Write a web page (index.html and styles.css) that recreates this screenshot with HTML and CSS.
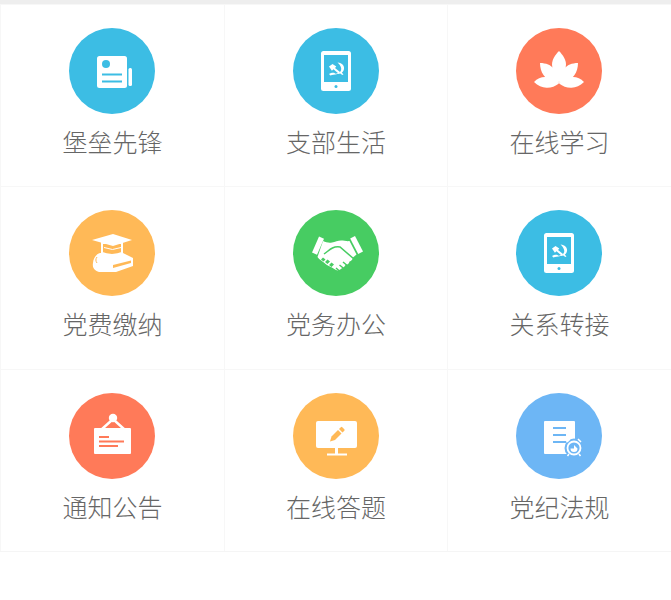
FILE: index.html
```html
<!DOCTYPE html>
<html lang="zh-CN">
<head>
	<meta charset="UTF-8">
	<meta name="viewport" content="width=device-width, initial-scale=1.0">
	<title>党建</title>
	<link rel="stylesheet" href="styles.css">
</head>
<body>

<div class="topBar"></div>

<svg class="defs" width="0" height="0">
	<symbol id="tablet" viewBox="0 0 86 86">
		<rect x="28" y="23" width="30" height="40" rx="2.500" fill="#fff"/>
		<rect x="31" y="27" width="24" height="27" fill="#3cbde4"/>
		<circle cx="43" cy="58.500" r="1.500" fill="#3cbde4"/>
		<path d="M44.500 34.500c5 .5 7 3.500 6.500 6.500-.3 1.800-1.200 3-2.200 3.800l1.700 1.400-1.200 .8-2-1.500c-1.500 .6-3.500 .7-5-.2 2 .2 5-.5 5.800-3 .7-2.500-1-5.500-3.600-7.800z" fill="#fff"/>
		<path d="M36 38.500l3.500-2.500 3.800 2.500-1.300 1.500 5 4-1.500 1.500-5-4.200-1.600 1.500z" fill="#fff"/>
		<path d="M36 46c1.500-1.200 3.500-1.500 5-1.300 1 .8 2.300 1.300 3 1.500-2.500 .2-4.500 .5-6.500 1.300z" fill="#fff"/>
	</symbol>
</svg>

<div class="menuGrid">

	<a class="menuItem">
		<span class="circle blue">
			<svg class="icon" viewBox="0 0 86 86">
				<rect x="28" y="28" width="30" height="32" rx="2.500" fill="#fff"/>
				<rect x="59.500" y="40" width="3.500" height="18" rx="1.500" fill="#fff"/>
				<circle cx="37" cy="36" r="4" fill="#3cbde4"/>
				<rect x="33" y="45.500" width="20" height="2" fill="#3cbde4"/>
				<rect x="33" y="52.500" width="20" height="2" fill="#3cbde4"/>
			</svg>
		</span>
		<span class="label">堡垒先锋</span>
	</a>

	<a class="menuItem">
		<span class="circle blue">
			<svg class="icon"><use href="#tablet"/></svg>
		</span>
		<span class="label">支部生活</span>
	</a>

	<a class="menuItem">
		<span class="circle coral">
			<svg class="icon" viewBox="0 0 86 86">
				<path d="M43 23c4 4 7 9 7 13.500 0 6-3 12-7 18-4-6-7-12-7-18C36 32 39 27 43 23z" fill="#fff"/>
				<path d="M24 35c6 0 11 2 14 6 2.500 3.500 4.500 8 5 14-6.500-.5-12-3-15.500-8-2.300-3-3.500-7.500-3.500-12z" fill="#fff"/>
				<path d="M62 35c-6 0-11 2-14 6-2.500 3.500-4.500 8-5 14 6.500-.5 12-3 15.500-8 2.300-3 3.500-7.500 3.500-12z" fill="#fff"/>
				<path d="M18 54c3.500-3.800 8-5.500 12.500-5 4.500 .5 9 3 12.500 6.500-4 3-8 4.500-12.500 4.300-4.500-.2-8.500-2.200-12.500-5.800z" fill="#fff"/>
				<path d="M68 54c-3.500-3.800-8-5.500-12.500-5-4.500 .5-9 3-12.500 6.500 4 3 8 4.500 12.500 4.300 4.500-.2 8.500-2.200 12.500-5.800z" fill="#fff"/>
			</svg>
		</span>
		<span class="label">在线学习</span>
	</a>

	<a class="menuItem">
		<span class="circle amber">
			<svg class="icon" viewBox="0 0 86 86">
				<path d="M31 43h23l10 5v8l-17 6H30c-4-1-7-4-6-9 0-4 3-9 7-10z" fill="#fff"/>
				<path d="M44 55l18-4.500v2.500l-18 5z" fill="#ffb957"/>
				<path d="M28 47c-1.500 2-1.500 4 0 6" stroke="#ffb957" stroke-width="1" fill="none"/>
				<path d="M33 33v10c5 2.500 15 2.500 20 0V33z" fill="#ffb957" stroke="#fff" stroke-width="2"/>
				<path d="M35 37.500l8.500 2 8.500-2" stroke="#fff" stroke-width="1" fill="none"/>
				<path d="M23 30l21-6 19 6-19 6z" fill="#fff"/>
			</svg>
		</span>
		<span class="label">党费缴纳</span>
	</a>

	<a class="menuItem">
		<span class="circle green">
			<svg class="icon" viewBox="0 0 86 86">
				<path d="M26 26.500l5 2.300-7 16-5-2.300z" fill="#fff"/>
				<path d="M62 26l8 15.500-4.800 2.500-8-15.500z" fill="#fff"/>
				<path d="M30 31c3 1.500 6 2 9 1.500 3-.5 6-2 9-2 3 0 6 1 8.500 .5l7 13.500-3.500 3c-.5 2-1.500 3.500-3.500 4-.5 2-2 3.500-4 3.500-1 2-2.500 3-4 3.500-1.500 1.500-3.500 2.500-5.500 1.500l-5-3c-3-1-6-3.500-8.500-5.500-1.500-1.500-4-2.500-5-4.500z" fill="#fff"/>
				<path d="M31 44c3-2 5.500-4.500 8.500-6 2.500-1.200 5-1.300 7.500-1l14 12" stroke="#47cc62" stroke-width="1.500" fill="none"/>
				<path d="M50 52l6 5M46.500 55l5.500 4.500M43 58l4 3.500" stroke="#47cc62" stroke-width="1.500" fill="none"/>
				<path d="M28 49.500l2-2 2.500 2-2 2zM32 52l2.500-2.500 2.500 2-2.500 2.500zM36 55l2.500-2.500 2.500 2-2.500 2.500z" fill="#47cc62"/>
			</svg>
		</span>
		<span class="label">党务办公</span>
	</a>

	<a class="menuItem">
		<span class="circle blue">
			<svg class="icon"><use href="#tablet"/></svg>
		</span>
		<span class="label">关系转接</span>
	</a>

	<a class="menuItem">
		<span class="circle coral">
			<svg class="icon" viewBox="0 0 86 86">
				<circle cx="44" cy="25" r="4.200" fill="#fff"/>
				<path d="M42.500 27.500L33 36M45.500 27.500L55 36" stroke="#fff" stroke-width="2.400" fill="none"/>
				<rect x="25" y="35" width="37" height="26" rx="1" fill="#fff"/>
				<rect x="30" y="43" width="10" height="2" fill="#ff7a59"/>
				<rect x="30" y="47.500" width="25" height="2" fill="#ff7a59"/>
				<rect x="30" y="52" width="19" height="2" fill="#ff7a59"/>
			</svg>
		</span>
		<span class="label">通知公告</span>
	</a>

	<a class="menuItem">
		<span class="circle amber">
			<svg class="icon" viewBox="0 0 86 86">
				<rect x="23" y="28" width="41" height="27" rx="2" fill="#fff"/>
				<rect x="42" y="55" width="3" height="6" fill="#fff"/>
				<rect x="34" y="60.500" width="20" height="2" fill="#fff"/>
				<path d="M37 48.500l1.500-5 6.500-6.500 3.500 3.500-6.500 6.500z" fill="#ffb957"/>
				<path d="M46 36l1.800-1.800a1 1 0 0 1 1.500 0l2 2a1 1 0 0 1 0 1.500L49.500 39.500z" fill="#ffb957"/>
			</svg>
		</span>
		<span class="label">在线答题</span>
	</a>

	<a class="menuItem">
		<span class="circle sky">
			<svg class="icon" viewBox="0 0 86 86">
				<rect x="28" y="28" width="31" height="33" rx="1" fill="#fff"/>
				<rect x="37" y="34" width="13" height="2" fill="#6db6f5"/>
				<rect x="37" y="41" width="13" height="2" fill="#6db6f5"/>
				<rect x="37" y="48" width="13" height="2" fill="#6db6f5"/>
				<circle cx="58" cy="55" r="9.500" fill="#6db6f5"/>
				<circle cx="58" cy="55" r="6.500" fill="#6db6f5" stroke="#fff" stroke-width="1.800"/>
				<path d="M51 49l3-3M65 49l-3-3" stroke="#fff" stroke-width="1.500"/>
				<path d="M53 61l-1.500 2M63 61l1.500 2" stroke="#fff" stroke-width="1.500"/>
				<path d="M58 52v3.500h-3.500a3.500 3.500 0 0 0 7 0z" fill="#fff"/>
			</svg>
		</span>
		<span class="label">党纪法规</span>
	</a>

</div>

</body>
</html>
```

FILE: styles.css
```css
body {
	margin: 0;
	background-color: #fff;
	font-family: "Noto Sans CJK SC", "Liberation Sans", sans-serif;
}

.topBar {
	height: 4px;
	background-color: #eee;
}

.defs {
	display: block;
	height: 0;
}

.menuGrid {
	display: grid;
	grid-template-columns: 224px 223px 224px;
	grid-auto-rows: 182.4px;
	border-bottom: 1px solid #f5f5f5;
}

.menuItem {
	display: flex;
	flex-direction: column;
	align-items: center;
	padding-top: 24px;
	box-sizing: border-box;
	box-shadow: inset 1px 1px 0 #f7f7f7;
	color: #666;
}

.circle {
	display: block;
	width: 86px;
	height: 86px;
	border-radius: 50%;
}

.blue { background-color: #3cbde4; }
.coral { background-color: #ff7a59; }
.amber { background-color: #ffb957; }
.green { background-color: #47cc62; }
.sky { background-color: #6db6f5; }

.icon {
	display: block;
	width: 86px;
	height: 86px;
}

.label {
	margin-top: 9px;
	padding-left: 1px;
	font-size: 25px;
	font-weight: 300;
	line-height: 36px;
}
```
